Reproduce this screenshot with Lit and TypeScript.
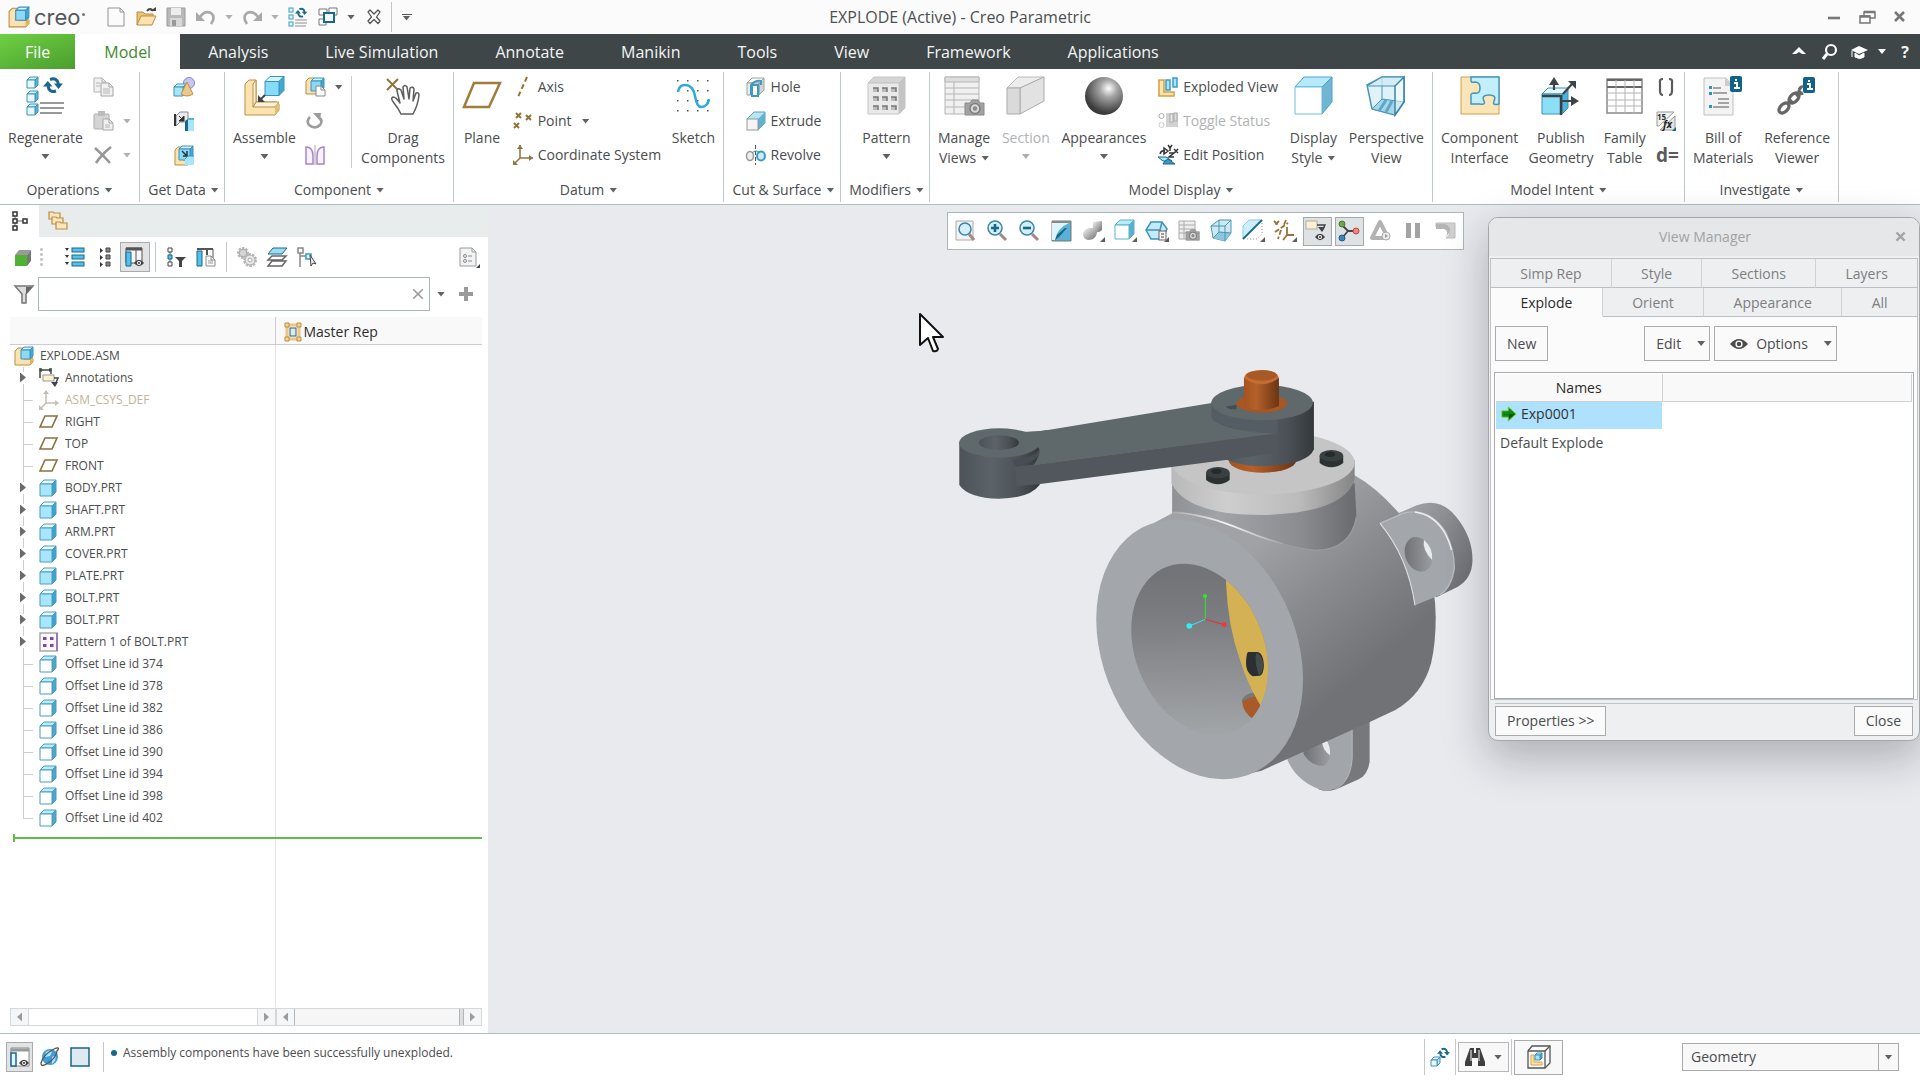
import { LitElement, html, svg, css, nothing } from "lit";
import { customElement, state } from "lit/decorators.js";
import { classMap } from "lit/directives/class-map.js";

/* ---------- icon helpers ---------- */

const TEAL = "#17688a";
const BLUE = "#3a9cc4";
const SKY = "#a6e6fc";
const TAN = "#fbe2ae";
const TANLINE = "#b98f45";
const BROWN = "#92733a";

// Box seen from the front with its top and right side showing.
const cube = (x: number, y: number, w: number, d: number, front = SKY, top = "#d5f4fe", side = "#45a8d2", line = "#3a93ba") => svg`
  <g stroke=${line} stroke-width="1" stroke-linejoin="round">
    <path d=${`M${x} ${y + d}l${d} ${-d}h${w}l${-d} ${d}z`} fill=${top} />
    <path d=${`M${x + w} ${y + d}l${d} ${-d}v${w}l${-d} ${d}z`} fill=${side} />
    <rect x=${x} y=${y + d} width=${w} height=${w} fill=${front} />
  </g>`;

const refresh = (x: number, y: number, s: number) => svg`
  <g transform=${`translate(${x} ${y}) scale(${s})`} fill="none" stroke=${TEAL} stroke-width="3">
    <path d="M7 3.500Q14 1 15.500 8" /><path d="M11 7.500h9l-4.500 5.500z" fill=${TEAL} stroke="none" />
    <path d="M13 15Q6 17 5 10" /><path d="M0 10.500h9.500L4.800 5z" fill=${TEAL} stroke="none" />
  </g>`;

const page = (x: number, y: number, w: number, h: number, fill = "#f4f4f5", line = "#9b9b9b") => svg`
  <path d=${`M${x} ${y}h${w - 4}l4 4v${h - 4}h${-w}z`} fill=${fill} stroke=${line} />
  <path d=${`M${x + w - 4} ${y}v4h4`} fill="none" stroke=${line} />`;

const eye = (x: number, y: number) => svg`
  <path d=${`M${x} ${y}q5-6.500 10 0q-5 6.500-10 0z`} fill="#444" /><circle cx=${x + 5} cy=${y} r="2" fill="#fff" /><circle cx=${x + 5} cy=${y} r="1" fill="#333" />`;

const badge = (x: number, y: number) => svg`
  <rect x=${x} y=${y} width="12" height="16" rx="2" fill="#0f6387" />
  <path d=${`M${x + 4} ${y + 7}h3v5m-3 0h6`} fill="none" stroke="#fff" stroke-width="2" /><rect x=${x + 5} y=${y + 3} width="2" height="2" fill="#fff" />`;

const camera = (x: number, y: number, s: number) => svg`
  <g transform=${`translate(${x} ${y}) scale(${s})`}><path d="M0 4h5l2-3h6l2 3h4v12H0z" fill="#a2a2a2" stroke="#8a8a8a" /><circle cx="10" cy="9.500" r="5" fill="#d9d9d9" stroke="#7d7d7d" stroke-width="1.500" /><circle cx="10" cy="9.500" r="2.200" fill="#8a8a8a" /></g>`;

const corner = svg`<path d="M24 18v5h-5z" fill="#5d5d5d" />`;

const asmIcon = svg`
  <path d="M1 5l3-3h6v11h9v3l-3 3H1z" fill=${TAN} stroke=${TANLINE} />
  <path d="M16 19l3-3V8l-3 3z" fill="#e0b45d" />
  ${cube(7, 1, 9, 3, "#8bd9f7")}`;

const ICONS: Record<string, unknown> = {
  asm: asmIcon,
  newFile: page(2, 1, 16, 18, "#fbfbfb", "#8f9496"),
  open: svg`<path d="M1 18V5h6l2 2h8v4" fill="#e9c274" stroke=${TANLINE} /><path d="M1 18l4-9h15l-4 9z" fill="#fbe2ae" stroke=${TANLINE} /><path d="M11 4q3-4 6 0" fill="none" stroke="#444" stroke-width="2" /><path d="M14 4h6V0z" fill="#444" />`,
  save: svg`<path d="M1 1h18v18H1z" fill="#b9b9b9" stroke="#9a9a9a" /><path d="M5 1h10v7H5z" fill="#ededed" /><path d="M4 11h12v8H4z" fill="#d8d8d8" /><path d="M6 13h4v6H6z" fill="#999" />`,
  undo: svg`<path d="M4 10Q9 3 15 6q5 4 0 11" fill="none" stroke="#a9a9a9" stroke-width="2.600" /><path d="M0 5v9h9z" fill="#a9a9a9" />`,
  redo: svg`<path d="M16 10Q11 3 5 6q-5 4 0 11" fill="none" stroke="#a9a9a9" stroke-width="2.600" /><path d="M20 5v9h-9z" fill="#a9a9a9" />`,
  regenSmall: svg`${[1, 8, 15].map((y) => svg`<rect x="1" y=${y} width="4" height="4" fill="#dff5fd" stroke=${BLUE} />`)}${refresh(7, 0, 0.62)}<path d="M7 13h12M7 16h12M7 19h11" stroke="#8d8d8d" />`,
  windows: svg`<path d="M1 2h8v6H1zM11 1h8v7h-8zM1 12h7v6H1z" fill="#fff" stroke="#777" /><rect x="6" y="6" width="10" height="9" fill="#f4fbff" stroke=${TEAL} stroke-width="2" />`,
  closeWin: svg`<path d="M4 5l2-2 4 4 4-4 2 2-3.500 5 3.500 4-2 2.500-4-4-4 4L4 14l3.500-4z" fill="none" stroke="#555" stroke-width="1.300" stroke-linejoin="round" />`,
  copy: svg`${page(1, 1, 12, 14, "#f1f1f1", "#b4b4b4")}${page(8, 6, 12, 13, "#f1f1f1", "#a5a5a5")}<path d="M3 6h4M3 9h4M10 12h7M10 14h7M10 16h7" stroke="#b5b5b5" />`,
  paste: svg`<rect x="1" y="3" width="15" height="15" rx="1" fill="#d5d5d5" stroke="#adadad" /><rect x="5" y="0" width="7" height="5" fill="#bcbcbc" />${page(10, 8, 10, 11, "#f1f1f1", "#a5a5a5")}<path d="M12 14h5M12 16h5" stroke="#b5b5b5" />`,
  del: svg`<path d="M2 3Q9 9 17 18M18 2Q9 9 3 18" fill="none" stroke="#979797" stroke-width="2.600" />`,
  shapes: svg`<circle cx="15" cy="6" r="5.500" fill="#c9c5f0" stroke="#7f86d4" />${cube(0, 7, 9, 3)}<path d="M13 5l-6 12q6 4 12 0z" fill="#ecc98b" stroke=${TANLINE} />`,
  copyGeom: svg`<path d="M2 15V5l4-4h8v10H6z" fill="#e9e9ee" stroke="#8a8a90" /><path d="M1 3v12" stroke="#333" stroke-width="2" /><path d="M5 5l5 5M10 5v5H5z" fill="#333" stroke="#333" /><path d="M11 20V10l3-2h6v12z" fill=${SKY} /><path d="M11 20V10l3-2v12z" fill=${TEAL} /><path d="M14 8h6" stroke="#5fb2d6" stroke-width="2" />`,
  shrink: svg`<path d="M1 5l3-3h5v13h5v5H1z" fill=${TAN} stroke=${TANLINE} />${cube(5, 1, 11, 3, "#8bd9f7")}<path d="M8 6l4 4m-3 1h4V6" fill="none" stroke="#234" stroke-width="1.500" /><path d="M11 14l3-3h6v9h-9z" fill=${SKY} /><path d="M11 14l3-3h6" fill="none" stroke="#3a93ba" />`,
  createAsm: svg`<path d="M1 4l3-3h5v11h6v5H1z" fill=${TAN} stroke=${TANLINE} />${cube(6, 1, 10, 3, "#8bd9f7")}${page(11, 9, 9, 10, "#fff", "#888")}`,
  repeat: svg`<path d="M5 6Q1 10 4 14q6 5 11 0 3-4 0-7" fill="none" stroke="#9c9c9c" stroke-width="2.600" /><path d="M8 2h8l-1 8z" fill="#9c9c9c" />`,
  mirror: svg`<path d="M1 2q7 0 7 9v8H1zM19 2q-7 0-7 9v8h7z" fill="#f8f2fc" stroke="#a884c9" stroke-width="1.500" /><path d="M10 0v20" stroke="#a5a5a5" />`,
  axis: svg`<path d="M14 0L5 20" stroke=${BROWN} stroke-width="2" stroke-dasharray="5 3" />`,
  point: svg`<path d="M3 2l5 5m0-5l-5 5M13 4l5 5m0-5l-5 5M1 12l5 5m0-5l-5 5" stroke=${BROWN} stroke-width="2" />`,
  csys: svg`<path d="M7 0v13h13M7 13l-6 6" fill="none" stroke=${BROWN} stroke-width="1.500" /><path d="M4 4l3-4 3 4zM16 10l4 3-4 3zM0 15v5h5z" fill=${BROWN} />`,
  hole: svg`${cube(1, 1, 12, 5, "#ececee", "#fff", "#d3d3d6", "#a0a0a0")}<path d="M5 18V8q4-5 10-4v4" fill="none" stroke=${BLUE} stroke-width="2" /><rect x="6" y="8" width="6" height="11" fill="#fff" stroke=${BLUE} stroke-width="2" />`,
  extrude: svg`<path d="M1 8l7-7h11v11l-7 7z" fill="#b9e4f3" stroke="#5f9fb8" /><path d="M12 8l7-7v11l-7 7z" fill="#62b1cf" /><rect x="1" y="8" width="11" height="11" fill="#f5f5f6" stroke="#999" />`,
  revolve: svg`<ellipse cx="4" cy="11" rx="3.500" ry="4.500" fill="#eee" stroke="#999" stroke-width="1.500" /><ellipse cx="15" cy="11" rx="4" ry="4.500" fill="#c9ecf8" stroke=${BLUE} stroke-width="2" /><path d="M6 8q4-4 8 0" fill="none" stroke=${BLUE} /><path d="M9.500 0v20" stroke="#555" stroke-dasharray="4 2" />`,
  explodedView: svg`<path d="M1 3h5v12h10v4H1z" fill=${TAN} stroke="#d5a03f" stroke-width="1.500" /><rect x="8" y="3" width="4" height="10" fill=${SKY} stroke=${BLUE} stroke-width="1.500" /><rect x="15" y="1" width="4" height="9" fill=${SKY} stroke=${BLUE} stroke-width="1.500" />`,
  toggle: svg`<circle cx="3.500" cy="5" r="2.500" fill="none" stroke="#aaa" /><circle cx="3.500" cy="14" r="2.500" fill="none" stroke="#ccc" /><path d="M8 2h12v14H8z" fill="#d2d2d2" /><rect x="12" y="3" width="3" height="8" fill="#e9e9e9" stroke="#aaa" /><rect x="16" y="2" width="3" height="8" fill="#ddd" stroke="#aaa" />`,
  editPos: svg`<path d="M2 9Q3 5 7 6" fill="none" stroke="#333" stroke-width="1.500" /><path d="M6 3l4 3-4 3zM10 0l2 3 2-3M12 3v3M16 4l4 4m0-4l-4 4M11 8h5l-5 4h5" fill="none" stroke="#333" stroke-width="1.500" /><path d="M0 12h8l6 4H5z" fill=${SKY} stroke=${TEAL} /><path d="M5 19h12l-7-5-3 2z" fill=${BLUE} stroke=${TEAL} />`,
  parens: svg`<path d="M7 2Q3 2 4 6v8q0 4 3 4M13 2q4 0 3 4v8q0 4-3 4" fill="none" stroke="#5b5b5b" stroke-width="2.200" />`,
  switchDim: svg`<path d="M1 1h17L3 15H1z" fill="#f2f2f2" stroke="#999" /><path d="M19 5v14H4z" fill="#e4e4e4" stroke="#999" /><text x="1" y="9" font-size="8" font-weight="700" fill="#333">15</text><text x="7" y="17" font-size="10" font-style="italic" font-weight="700" fill="#222">fx</text><path d="M20 16v4h-4z" fill=${TEAL} />`,
  relation: svg`<text x="0" y="17" font-size="19" font-weight="700" fill="#5b5b5b">d=</text>`,

  /* large ribbon icons, 40 x 40 */
  regenerate: svg`${[0, 14, 27].map((y) => cube(2, y + 1, 8, 3, "#e9f8fe", "#d5f4fe", "#5ab3d9"))}${refresh(18, 0, 1)}<path d="M15 27h24M15 32h24M15 37h22" stroke="#999" stroke-width="2" />`,
  assemble: svg`<path d="M1 8l4-4h7v22h21l2 2v6l-4 5H1z" fill=${TAN} stroke=${TANLINE} /><path d="M9 8l3-4v22l-3 5zM9 31l3-5h23l-4 5z" fill="#fdf3da" stroke=${TANLINE} /><path d="M31 31l4-5v7l-4 6z" fill="#e5bd6c" />${cube(21, 0.5, 14, 5, "#86dbf9")}<path d="M21 19l-5 5" stroke="#444" stroke-width="2" /><path d="M14 19v7h7z" fill="#444" />`,
  drag: svg`<path d="M4 3l11 11M15 3L4 14" stroke=${BROWN} stroke-width="2" /><path d="M18 38q-3-6-7-11-4-5-1-6 3 0 7 6L14 15q0-4 4-1l3 9-1-12q2-3 4 0l2 12 1-11q3-2 4 1l-1 12 3-8q3-1 3 2-1 10-6 19z" fill="#fff" stroke="#5d5d5d" stroke-width="1.500" stroke-linejoin="round" />`,
  plane: svg`<path d="M12 7h26l-11 24H2z" fill="none" stroke="#a07c3c" stroke-width="2.500" />`,
  sketch: svg`${[4, 14, 24, 34].map((x) => [4, 14, 24, 34].map((y) => svg`<rect x=${x} y=${y} width="1.500" height="1.500" fill="#555" />`))}<path d="M5 16Q6 9 12 9q8 0 10 11 2 12 7 11 6-1 7-8" fill="none" stroke="#2fa8e0" stroke-width="2.500" />`,
  pattern: svg`${cube(2, 1, 31, 6, "#e9e9e9", "#d5d5d5", "#c4c4c4", "#c4c4c4")}${[7, 16, 25].map((x) => [12, 21, 30].map((y) => svg`<rect x=${x} y=${y} width="5" height="4" fill="#bbb" /><path d=${`M${x} ${y}h5v4`} fill="none" stroke="#777" stroke-width="1.500" />`))}`,
  manage: svg`<path d="M1 1h34v37H1z" fill="#f0f0f0" stroke="#b5b5b5" /><path d="M1 1h34v5H1z" fill="#ddd" stroke="#b5b5b5" /><path d="M1 12h34M1 18h34M1 24h34M1 31h34M10 6v32" stroke="#b5b5b5" />${camera(21, 23, 1)}`,
  section: svg`<path d="M1 12L12 1h26L14 12z" fill="#ececec" stroke="#b9b9b9" /><path d="M14 12L38 1v24L14 38z" fill="#e2e2e2" stroke="#ababab" /><path d="M1 12h13v26H1z" fill="#dadada" stroke="#ababab" />`,
  appearances: svg`<defs><radialGradient id="ball" cx=".62" cy=".3" r=".65"><stop offset="0" stop-color="#fff" /><stop offset=".35" stop-color="#a5a5a5" /><stop offset="1" stop-color="#3b3b3b" /></radialGradient></defs><circle cx="20" cy="20" r="19" fill="url(#ball)" />`,
  display: svg`<path d="M2 11L11 1h28L29 11z" fill="#b4eafc" stroke="#4ba3c7" /><path d="M29 11L39 1v25L29 38z" fill="#70b5d2" stroke="#4ba3c7" /><path d="M2 11h27v27H2z" fill="#fff" stroke="#6fc0df" />`,
  perspective: svg`<path d="M1 9L16 1h22v25l-9 13L6 33z" fill="#dff1f9" stroke="#4c93b4" stroke-width="1.500" /><path d="M16 1v22l22 3L29 39 6 33l10-10" fill="#a5d5e8" stroke="#4c93b4" /><path d="M16 1h22l-9 9H1z" fill="#cfeaf5" fill-opacity=".7" stroke="#4c93b4" /><path d="M29 10v29l9-13V1z" fill="#fff" fill-opacity=".5" stroke="#3a85a8" stroke-width="1.500" /><path d="M20 24l-7 11M26 25l-6 11" stroke="#5fa9c8" stroke-width="3" />`,
  interface: svg`<path d="M1 1h38v37H1z" fill="#fbe5b8" stroke="#cba04f" /><path d="M11 1h28v27q-7 2-5-3 3-6-5-6-8 0-5 6 2 4-4 3H11v-8q-1-3 4-3 5 1 5-5t-5-6q-4 1-4-1z" fill="#c3eefc" stroke="#4396bb" stroke-width="1.500" />`,
  publish: svg`${cube(1, 12, 20, 6, "#8ddff8", "#e5f8fe", "#4fb2d8")}<path d="M1 20h18M20 19v20" stroke="#3b4043" stroke-width="2.500" /><path d="M13 14V6M22 18l9-10M20 25h12" stroke="#3f4547" stroke-width="2.200" /><path d="M8 9l5-8 5 8zM27 5h8v8zM30 20l8 5-8 5z" fill="#3f4547" />`,
  family: svg`<path d="M2 3h35v34H2z" fill="#fff" stroke="#888" stroke-width="1.500" /><path d="M2 4h35M2 11h35" stroke="#666" stroke-width="2" /><path d="M2 17h35M2 24h35M2 30h35M11 4v33M20 4v33M29 4v33" stroke="#b5b5b5" />`,
  bom: svg`<path d="M1 2h22l7 8v29H1z" fill="#f3f3f4" stroke="#c0c0c0" /><path d="M22 2l8 8h-8z" fill="#ccc" /><path d="M10 12h8M10 17h14M15 23h11M15 27h11M10 31h16" stroke="#8b8b8b" stroke-width="1.500" /><path d="M6 10h3v3H6zM6 16h3v3H6zM6 29h3v3H6z" fill="#2b93c9" />${badge(27, 0)}`,
  refViewer: svg`<g fill="none" stroke="#666" stroke-width="3.200"><ellipse cx="7" cy="32" rx="6" ry="3.800" transform="rotate(-45 7 32)" /><ellipse cx="17" cy="22" rx="6" ry="3.800" transform="rotate(-45 17 22)" /><path d="M10 29l5-5M19 20l5-5M22 14q2-4 4-3M22 14q0 5 4 3" /></g>${badge(26, 1)}`,

  /* title and tab bar */
  up: svg`<path d="M3 12l7-7 7 7h-4l-3-2-3 2z" fill="#fff" />`,
  find: svg`<circle cx="12" cy="8" r="5" fill="none" stroke="#fff" stroke-width="2.200" /><path d="M8 12l-4 5" stroke="#fff" stroke-width="3" />`,
  learn: svg`<path d="M2 8l8-4 9 4-9 4z" fill="#fff" /><path d="M6 11v4q5 3 9 0v-4l-5 3zM3 9v6" fill="#fff" stroke="#fff" />`,
  min: svg`<path d="M4 11h12" stroke="#777" stroke-width="2.600" />`,
  restore: svg`<path d="M7 5h11v6H7z" fill="none" stroke="#777" stroke-width="1.500" /><path d="M7 5h11" stroke="#777" stroke-width="2.500" /><path d="M3 9h10v7H3z" fill="#fbfbfb" stroke="#777" stroke-width="1.500" /><path d="M3 9.500h10" stroke="#777" stroke-width="2.500" />`,
  close: svg`<path d="M5 5l9 9M14 5l-9 9" stroke="#777" stroke-width="2.600" />`,

  /* model tree */
  treeTab: svg`<path d="M5 4v13M5 10h10" fill="none" stroke="#666" /><path d="M3 1h4v4H3zM3 8h4v4H3zM3 15h4v4H3zM13 8h4v4h-4z" fill="#fff" stroke="#333" stroke-width="1.500" />`,
  folders: svg`${[[1, 1], [4, 6], [8, 11]].map(([x, y]) => svg`<path d=${`M${x} ${y + 7}v-7h4l1 1h6v6z`} fill="#fce7bd" stroke=${TANLINE} stroke-width="1.200" />`)}`,
  greenCube: svg`<path d="M2 8l4-5h12l-4 5z" fill="#9a9a9a" /><path d="M14 8l4-5v11l-4 5z" fill="#777" /><path d="M2 8h12v11H2z" fill="#4fb233" />`,
  expandAll: svg`${[1, 8, 15].map((y) => svg`<path d=${`M0 ${y}h4l-2 3z`} fill="#333" /><rect x="7" y=${y} width="12" height="4" fill="#57c0ea" stroke=${TEAL} />`)}`,
  collapseAll: svg`${[1, 8, 15].map((y) => svg`<path d=${`M5 ${y}v5l3-2.500z`} fill="#333" /><path d=${`M11 ${y}h4v4h-4z`} fill="#888" stroke="#444" />`)}`,
  columns: svg`<path d="M1 1h16v15H1z" fill="#f6f6f6" stroke="#555" /><path d="M1 2h16" stroke="#555" stroke-width="3" /><path d="M1 5h5v14H1z" fill="#57c0ea" stroke=${TEAL} /><path d="M11 2v13" stroke="#555" />${eye(9, 16)}`,
  treeFilter: svg`<path d="M4 4v14" stroke="#555" /><path d="M2 1h4v4H2z" fill="#fff" stroke="#444" /><path d="M2 8h4v4H2z" fill="#57c0ea" stroke=${TEAL} /><path d="M2 15h4v4H2z" fill="#fff" stroke="#444" /><path d="M9 10h11l-4 4v6h-3v-6z" fill="#444" />`,
  treeCols: svg`<path d="M1 2h16v12" fill="none" stroke="#555" /><path d="M1 2h16M11 2v6" stroke="#555" stroke-width="2" /><path d="M1 4h5v15H1z" fill="#57c0ea" stroke=${TEAL} />${page(10, 9, 9, 10, "#fff", "#888")}<path d="M12 14h5M12 16h5" stroke="#999" />`,
  gears: svg`<circle cx="6" cy="6" r="4.500" fill="#ccc" stroke="#b9b9b9" stroke-width="3" stroke-dasharray="2.200 1.100" /><circle cx="6" cy="6" r="3.800" fill="#d4d4d4" stroke="#a9a9a9" /><circle cx="13" cy="13" r="5.500" fill="#eee" stroke="#b9b9b9" stroke-width="3" stroke-dasharray="2.300 1.100" /><circle cx="13" cy="13" r="5" fill="#e9e9e9" stroke="#a9a9a9" /><circle cx="13" cy="13" r="2" fill="#fff" stroke="#a9a9a9" />`,
  layers: svg`<path d="M1 19l4-5h14l-4 5zM1 13l4-4h14l-4 4z" fill="#fff" stroke="#666" stroke-width="1.500" /><path d="M1 7l5-6h14l-5 6z" fill="#9cdcf5" stroke=${TEAL} />`,
  selTree: svg`<path d="M3 5v15M3 9h6" fill="none" stroke="#888" stroke-width="1.500" /><path d="M1 1h5v5H1z" fill="#fff" stroke="#888" stroke-width="1.500" /><path d="M9 7h5v5H9z" fill="#dff4fd" stroke=${BLUE} stroke-width="1.500" /><path d="M13 8l6 9-3-1-2 3z" fill="#eee" stroke="#444" />`,
  treeSettings: svg`${page(1, 1, 16, 18, "#f1f3f4", "#9b9b9b")}<circle cx="6" cy="9" r="1.500" fill="none" stroke="#888" /><circle cx="6" cy="14" r="1.500" fill="none" stroke="#888" /><path d="M9 9h4M9 14h4" stroke="#888" /><path d="M21 17v4h-4z" fill="#444" />`,
  funnel: svg`<path d="M1 2h18l-7 8v9H8v-9z" fill="#ddd" stroke="#777" stroke-width="1.500" /><path d="M12 10l6-7h-6z" fill="#666" />`,
  plus: svg`<path d="M10 3v14M3 10h14" stroke="#9b9b9b" stroke-width="4" />`,
  clear: svg`<path d="M4 4l12 12M16 4L4 16" stroke="#9b9b9b" stroke-width="2" />`,
  masterRep: svg`<path d="M3 3h12v14H3z" fill="#e9f8ff" stroke="#ecc684" stroke-width="3" /><path d="M1 1h4v4H1zM13 1h4v4h-4zM1 15h4v4H1zM13 15h4v4h-4z" fill="#f6d490" stroke=${TANLINE} /><rect x="6" y="6" width="6" height="8" fill="#cdeffc" stroke="#555" />`,
  annotations: svg`<path d="M1 10V0M12 0v6M1 2h11" fill="none" stroke="#444" stroke-width="1.500" /><path d="M3 0L0 2l3 2zM10 0l3 2-3 2z" fill="#444" /><rect x="4" y="7" width="11" height="6" fill="#fdf1d2" stroke="#999" /><path d="M15 10h4l-3 7" fill="none" stroke="#444" stroke-width="1.500" /><path d="M12 14l4 5 3-5z" fill="#444" />`,
  csysDim: svg`<g opacity=".5"><path d="M7 1v12h12M7 13l-6 6" fill="none" stroke="#8b8069" stroke-width="1.500" /><path d="M4 4l3-4 3 4zM16 10l4 3-4 3zM0 15v5h5z" fill="#8b8069" /></g>`,
  datum: svg`<path d="M6 4h12l-5 11H1z" fill="none" stroke="#8a7044" stroke-width="1.600" />`,
  part: cube(1, 2, 12, 4, "#a8e6fd", "#e8f9ff", "#3aa3d4", "#4b9cbf"),
  offset: cube(1, 2, 12, 4, "#ffffff", "#b8ecfd", "#4ea6c8", "#4b9cbf"),
  patternSmall: svg`<path d="M1 1h17v18H1z" fill="#fbf7fd" stroke="#a8a8ae" stroke-width="1.500" /><path d="M18 1v18" stroke="#9a78bb" stroke-width="2" />${[4, 11].map((x) => [5, 12].map((y) => svg`<rect x=${x} y=${y} width="3.500" height="3" fill="#7a4aa8" />`))}`,

  /* graphics toolbar, 24 x 24 */
  refit: svg`<path d="M3 2h17v19H3z" fill="#f3f3f3" stroke="#aaa" /><circle cx="12" cy="10" r="6" fill="#d3effb" stroke="#3a85a8" stroke-width="1.500" /><path d="M16 15l5 6" stroke="#a28a80" stroke-width="3" />`,
  zoomIn: svg`<circle cx="10" cy="9" r="7" fill="#d3effb" stroke="#3a85a8" stroke-width="1.500" /><path d="M10 5v8M6 9h8" stroke=${TEAL} stroke-width="2.600" /><path d="M15 15l6 6" stroke="#a28a80" stroke-width="3" />`,
  zoomOut: svg`<circle cx="10" cy="9" r="7" fill="#d3effb" stroke="#3a85a8" stroke-width="1.500" /><path d="M6 9h8" stroke=${TEAL} stroke-width="2.600" /><path d="M15 15l6 6" stroke="#a28a80" stroke-width="3" />`,
  repaint: svg`<path d="M3 2h19v20H3z" fill="#5bb1d3" stroke="#777" /><path d="M3 4h17q-12 5-14 17H3z" fill="#dff4fc" /><path d="M3 3h19" stroke="#888" stroke-width="2" /><path d="M18 9l-8 9-4 3 2-5 8-7z" fill=${TEAL} />`,
  shading: svg`<defs><linearGradient id="metal" x2="1" y2="1"><stop offset="0" stop-color="#f5f5f5" /><stop offset="1" stop-color="#6c6c6c" /></linearGradient></defs><path d="M12 3l9-1v9q-3 3-7 2-3-3-2-10z" fill="url(#metal)" /><path d="M8 9h8q1 12-9 12-5-1-5-6 0-4 6-6z" fill="url(#metal)" />${corner}`,
  dispStyle: svg`${cube(2, 1, 14, 5, "#fff", "#b9ecfb", "#5cb0cf", "#5cb0cf")}${corner}`,
  orient: svg`<path d="M6 3h11l5 7-5 10H6l-5-9z" fill="#c4ecf8" stroke="#3a93ba" stroke-width="1.500" /><path d="M1 11h14l2-8M15 11l2 9" fill="none" stroke="#3a93ba" stroke-width="1.500" /><rect x="14" y="12" width="7" height="9" fill="#f5f5f5" stroke="#666" /><path d="M16 15h3M16 18h3" stroke="#444" />${corner}`,
  savedViews: svg`<path d="M2 2h16v18H2z" fill="#eee" stroke="#aaa" /><path d="M2 6h16M2 10h16M2 14h16M7 2v18" stroke="#aaa" />${camera(9, 10, 0.7)}`,
  persp: svg`<path d="M2 7l8-6h12v13l-6 8-12-3z" fill="#cbe8f3" stroke="#4c93b4" /><path d="M10 13l12 1-6 8-12-3z" fill="#8cc7de" /><path d="M2 7h14l6-6M16 7v15M10 1v12l12 1M10 13l-6 6" fill="none" stroke="#4c93b4" />`,
  section2: svg`<path d="M2 7l6-6h13v0L2 20z" fill="#cdeef9" stroke="#8fcbe3" /><path d="M21 1v14l-5 5H5" fill="none" stroke="#999" stroke-dasharray="1 2" /><path d="M21 1L2 20" stroke=${TEAL} stroke-width="1.800" />${corner}`,
  datums: svg`<path d="M1 2l5 5m0-5L1 7M13 1l-3 7M8 11l-3 9M2 13L15 4" stroke=${BROWN} stroke-width="1.800" stroke-dasharray="5 2" /><path d="M14 8v8h7M14 16l-4 5" fill="none" stroke=${BROWN} stroke-width="1.800" />${corner}`,
  annot: svg`<rect x="1" y="2" width="11" height="8" fill="#fdf1d2" stroke="#aaa" /><path d="M12 6h8l-3 6" fill="none" stroke="#444" stroke-width="1.500" /><path d="M13 8l4 5 3-5z" fill="#444" />${eye(10, 18)}`,
  spin: svg`<path d="M4 5l7 7 8 0M11 12l-6 7" fill="none" stroke="#444" stroke-width="1.800" /><circle cx="5" cy="5" r="3" fill="#6aa84f" stroke="#447a33" /><circle cx="19" cy="12" r="3" fill="#e98a7d" stroke="#b94a3f" /><circle cx="5" cy="19" r="3" fill="#3e85b5" stroke="#1d5c86" />`,
  sim: svg`<path d="M11 3l8 16H3z" fill="none" stroke="#b3b3b3" stroke-width="4" stroke-linejoin="round" /><circle cx="17" cy="17" r="4" fill="#eee" stroke="#aaa" /><path d="M16 15l3 2-3 2z" fill="#999" />`,
  pause: svg`<path d="M5 4h5v15H5zM14 4h5v15h-5z" fill="#a3a3a3" />`,
  simEnd: svg`<path d="M3 4h19v15h-9q4-2 4-6-1-5-6-5H3z" fill="#d0d0d0" stroke="#bbb" /><path d="M3 5h9q7 3 4 9l-4 5q5-7-1-9H3z" fill="#b5b5b5" />`,

  /* dialog and status bar */
  eye: svg`<path d="M0 10q10-11 20 0-10 11-20 0z" fill="#4b4b4b" /><circle cx="10" cy="10" r="4" fill="#fff" /><circle cx="10" cy="10" r="2.500" fill="#4b4b4b" />`,
  active: svg`<path d="M1 6h8V1l10 9-10 9v-5H1z" fill="#0b8a14" stroke="#8bd43a" /><path d="M2 11h8v5l7-6z" fill="#124d0d" />`,
  panel: svg`<path d="M1 1h18v18H1z" fill="#fff" stroke="#888" /><path d="M1 3h18" stroke="#999" stroke-width="3" /><path d="M1 6h5v13H1z" fill="#dff4fc" stroke=${TEAL} stroke-width="1.500" />${eye(9, 16)}`,
  globe: svg`<circle cx="10" cy="10" r="8" fill="#3d9dd8" /><path d="M6 5q4-3 6 0l-2 4-5 1zM12 10l4-2-1 6-3 3z" fill="#b9e2f6" /><path d="M17 4Q21-1 14 2 3 8 1 16q0 5 7 0 8-5 9-12z" fill="none" stroke="#555" stroke-width="1.300" />`,
  blank: svg`<path d="M1 1h18v18H1z" fill="#dfeaf0" stroke=${TEAL} stroke-width="1.500" />`,
  regenPart: svg`${refresh(7, 0, 0.65)}${cube(1, 10, 6, 3, "#eefaff", "#eefaff", "#bfe6f5")}`,
  binoculars: svg`<path d="M5 1h4v5h2V1h4l5 14v4h-7v-8H7v8H0v-4z" fill="#3f3f3f" /><path d="M6 3v11M14 3v11" stroke="#9c9c9c" stroke-width="2" />`,
  modelBox: svg`<path d="M1 6l4-5h18v17l-5 5H1z" fill="#fafafa" stroke="#555" stroke-width="1.300" /><path d="M1 6h17v17M18 6l5-5" fill="none" stroke="#555" stroke-width="1.300" /><path d="M4 10h3v7h8v3H4z" fill=${TAN} stroke="#dba446" />${cube(8, 8, 5, 2)}`,
};

const icon = (name: string, size = 20) => {
  const box = size >= 40 ? 40 : size === 24 ? 24 : 20;
  return html`<svg class="icon" width=${size} height=${size} viewBox=${`0 0 ${box} ${box}`} aria-hidden="true">${ICONS[name]}</svg>`;
};

/* ---------- data ---------- */

const MENU = ["Analysis", "Live Simulation", "Annotate", "Manikin", "Tools", "View", "Framework", "Applications"];

const VIEW_TOOLS = [
  ["refit", "Refit"], ["zoomIn", "Zoom in"], ["zoomOut", "Zoom out"], ["repaint", "Repaint"],
  ["shading", "Rendering options"], ["dispStyle", "Display style"], ["orient", "Saved orientations"], ["savedViews", "View manager"],
  ["persp", "Perspective view"], ["section2", "Sections"], ["datums", "Datum display filters"], ["annot", "Annotation display"],
  ["spin", "Spin center"], ["sim", "Simulate"], ["pause", "Pause"], ["simEnd", "End simulation"],
];

type Node = { name: string; icon: string; open?: boolean; dim?: boolean };
const part = (name: string): Node => ({ name: `${name}.PRT`, icon: "part", open: true });
const NODES: Node[] = [
  { name: "Annotations", icon: "annotations", open: true },
  { name: "ASM_CSYS_DEF", icon: "csysDim", dim: true },
  ...["RIGHT", "TOP", "FRONT"].map((name) => ({ name, icon: "datum" })),
  ...["BODY", "SHAFT", "ARM", "COVER", "PLATE", "BOLT", "BOLT"].map(part),
  { name: "Pattern 1 of BOLT.PRT", icon: "patternSmall", open: true },
  ...[374, 378, 382, 386, 390, 394, 398, 402].map((id) => ({ name: `Offset Line id ${id}`, icon: "offset" })),
];

/* ---------- 3D model ---------- */

const bolt = (x: number, y: number) => svg`
  <path d=${`M${x - 33} ${y - 10}v22q33 26 66 0v-22z`} fill="#2c3132" />
  <ellipse cx=${x} cy=${y - 10} rx="33" ry="17" fill="#394041" />
  <ellipse cx=${x - 4} cy=${y - 14} rx="14" ry="8" fill="#252a2b" />`;

const model = html`
  <svg class="model" width="560" height="460" viewBox="0 0 560 460" role="img" aria-label="Valve assembly">
    <defs>
      <linearGradient id="body" gradientUnits="userSpaceOnUse" x1="900" y1="560" x2="1230" y2="930">
        <stop offset="0" stop-color="#a0a2a6" /><stop offset=".45" stop-color="#8a8b8f" /><stop offset="1" stop-color="#717276" />
      </linearGradient>
      <linearGradient id="bore" x1=".35" y1="0" x2=".6" y2="1">
        <stop offset=".1" stop-color="#737478" /><stop offset=".35" stop-color="#7d7e82" /><stop offset="1" stop-color="#a3a6a9" />
      </linearGradient>
      <linearGradient id="neck"><stop offset="0" stop-color="#8f9194" /><stop offset=".25" stop-color="#a1a4a7" /><stop offset=".7" stop-color="#8b8c90" /><stop offset="1" stop-color="#696a6e" /></linearGradient>
      <linearGradient id="rim"><stop offset="0" stop-color="#b9b9b9" /><stop offset=".3" stop-color="#cfcece" /><stop offset=".7" stop-color="#bcbbbb" /><stop offset="1" stop-color="#858585" /></linearGradient>
      <linearGradient id="hub"><stop offset="0" stop-color="#4c5258" /><stop offset=".4" stop-color="#5b6369" /><stop offset=".75" stop-color="#4b5056" /><stop offset="1" stop-color="#33383b" /></linearGradient>
      <linearGradient id="copper"><stop offset="0" stop-color="#a5531f" /><stop offset=".35" stop-color="#b5602a" /><stop offset="1" stop-color="#6b3513" /></linearGradient>
      <linearGradient id="lug" x2="1" y2="1"><stop offset="0" stop-color="#a3a6aa" /><stop offset="1" stop-color="#68696d" /></linearGradient>
      <linearGradient id="lugHole"><stop offset="0" stop-color="#707175" /><stop offset="1" stop-color="#9b9da1" /></linearGradient>
      <linearGradient id="shine"><stop offset="0" stop-color="#f4f4f5" stop-opacity=".2" /><stop offset=".5" stop-color="#f8f8f9" /><stop offset="1" stop-color="#f4f4f5" stop-opacity=".1" /></linearGradient>
      <clipPath id="boreClip"><circle r="1" transform="matrix(191.5 59 0 250 727 898)" /></clipPath>
    </defs>
    <g transform="scale(.357143 .333333)">
      <!-- lower lug -->
      <path d="M1060 1160L1203 1100V1235Q1198 1275 1172 1288L1110 1318Q1080 1328 1060 1318Z" fill="#77787c" />
      <path d="M972 1228Q1000 1300 1080 1324Q1150 1310 1154 1225V1130L1000 1190Z" fill="#a2a5a9" />
      <path d="M1154 1130V1225Q1150 1295 1105 1318" fill="none" stroke="#b3b5b8" stroke-width="3" />
      <path d="M1018 1212Q1040 1250 1075 1247Q1100 1230 1088 1190L1070 1165L1018 1195Z" fill="url(#lugHole)" />
      <path d="M1070 1178Q1072 1200 1092 1216Q1094 1190 1082 1170Z" fill="#e8eaee" />
      <!-- body -->
      <path d="M650 490L600 518L800 1287L900 1262L1205 1115L1275 1080Q1350 1035 1375 940Q1388 880 1388 800Q1388 640 1283 487Q1225 415 1160 375L900 420Z" fill="url(#body)" />
      <!-- side lug -->
      <path d="M1283 490L1335 466Q1400 440 1445 500Q1491 560 1491 630Q1490 685 1450 710L1390 742L1290 600Z" fill="url(#lug)" />
      <path d="M1232 520L1300 489Q1370 472 1415 545Q1441 600 1440 655Q1432 712 1400 735L1330 766Q1310 620 1232 520Z" fill="#a3a6aa" />
      <path d="M1232 520L1300 489Q1370 472 1415 545Q1441 600 1440 655Q1432 712 1400 735" fill="none" stroke="#b9bbbe" stroke-width="4" />
      <path d="M1330 486Q1385 494 1415 552Q1428 580 1432 600" fill="none" stroke="#eff0f1" stroke-width="4" />
      <path d="M1330 766Q1310 620 1232 520" fill="none" stroke="#dedfe1" stroke-width="3" />
      <circle r="1" transform="matrix(39 10 0 51 1340 613)" fill="url(#lugHole)" />
      <path d="M1355 569Q1350 600 1378 630Q1382 595 1355 569Z" fill="#e8eaee" />
      <!-- neck -->
      <path d="M650 400V488Q740 490 850 540Q960 590 1050 601Q1150 600 1166 500L1161 400Z" fill="url(#neck)" />
      <path d="M650 488Q740 490 850 540Q960 590 1050 601Q1150 600 1166 500" fill="none" stroke="#9c9ea1" stroke-width="3" />
      <path d="M655 487Q740 491 850 541Q910 568 960 580" fill="none" stroke="url(#shine)" stroke-width="5" stroke-linecap="round" />
      <!-- front flange and bore -->
      <circle r="1" transform="matrix(289.500 90 0 379 727 898)" fill="#a3a6aa" />
      <circle r="1" transform="matrix(191.500 59 0 250 727 898)" fill="url(#bore)" />
      <g clip-path="url(#boreClip)">
        <path d="M846 1050Q858 1030 878 1028L920 1110H880Q845 1085 846 1050Z" fill="#a85a28" />
        <path d="M846 1050Q850 1032 878 1028L880 1040Q860 1044 846 1056Z" fill="#77787c" />
        <path d="M801 680V700Q806 830 840 930Q860 1000 897 1066L960 1060V700Z" fill="#d4b254" />
      </g>
      <path d="M862 906H890Q905 910 907 945Q906 975 895 977L875 979Q856 965 857 940Q857 915 862 906Z" fill="#2b2f30" />
      <path d="M885 908Q904 915 905 945Q903 972 893 975Q880 940 885 908Z" fill="#454b4c" />
      <!-- spin centre -->
      <path d="M743 808V738" stroke="#2fe52f" stroke-width="3" /><path d="M743 808L698 828" stroke="#35e8e8" stroke-width="3" /><path d="M743 808L796 824" stroke="#e33030" stroke-width="3" />
      <circle cx="742" cy="738" r="6" fill="#2fe52f" /><circle cx="698" cy="828" r="8" fill="#2ff0f0" /><circle cx="796" cy="824" r="7" fill="#ef3a3a" />
      <!-- cover plate -->
      <path d="M648 340V400Q690 494 900 495Q1130 490 1161 390V330Z" fill="url(#rim)" />
      <ellipse cx="905" cy="338" rx="256" ry="95" fill="#c6c5c5" />
      <ellipse cx="903" cy="332" rx="94" ry="36" fill="url(#copper)" />
      ${bolt(1096, 327)}${bolt(778, 378)}
      <!-- arm -->
      <path d="M760 160V290Q790 346 902 349Q1030 345 1047 298V155Z" fill="url(#hub)" />
      <path d="M54 280V405Q80 445 165 446Q250 445 279 405V290Z" fill="url(#hub)" />
      <path d="M210 350L270 343L945 248V308L800 330L275 403L215 408Z" fill="#52575d" />
      <path d="M245 246L290 242L765 158V210Q820 250 945 250L262 346Q279 320 279 295Z" fill="#5f686b" />
      <path d="M200 330Q276 322 279 292V308Q272 335 215 350Z" fill="#474d52" />
      <ellipse cx="166" cy="279" rx="113" ry="44" fill="#5f686b" />
      <path d="M215 242Q245 250 300 240L320 280L279 296Z" fill="#5f686b" />
      <ellipse cx="165" cy="278" rx="56" ry="22" fill="url(#hub)" />
      <path d="M760 155V205Q800 240 900 246L945 248V200Z" fill="#555d64" />
      <ellipse cx="902" cy="158" rx="142" ry="53" fill="#5f686b" />
      <path d="M800 170L830 164V178H812Z" fill="#454d51" />
      <!-- shaft -->
      <ellipse cx="901" cy="161" rx="71" ry="27" fill="#a85623" />
      <path d="M851 84V168Q900 192 949 168V84Z" fill="url(#copper)" />
      <path d="M851 84Q855 68 870 66H932Q946 70 949 84Q900 122 851 84Z" fill="#c56c33" />
      <ellipse cx="901" cy="76" rx="42" ry="16" fill="#a85a26" />
    </g>
  </svg>`;

/* ---------- application ---------- */

@customElement("app-root")
export class AppRoot extends LitElement {
  @state() private query = "";
  @state() private selected = "Exp0001";

  static styles = css`
    :host { display: flex; flex-direction: column; min-height: 100vh; font-family: "Open Sans", "Noto Sans", sans-serif; font-size: 14px; line-height: 20px; color: #4a4c4e; background: #fff; overflow: hidden; }
    * { box-sizing: border-box; }
    button, input, select { font: inherit; color: inherit; margin: 0; padding: 0; border: 0; background: none; border-radius: 0; }
    button { display: inline-flex; align-items: center; justify-content: center; flex: none; white-space: nowrap; }
    .icon { display: block; flex: none; overflow: visible; }
    .caret { flex: none; width: 8px; height: 5px; background: #5f6163; clip-path: polygon(0 0, 100% 0, 50% 100%); }
    .caret.dim { background: #b0b0b0; }

    .titlebar { display: grid; grid-template-columns: 1fr auto 1fr; align-items: center; height: 34px; background: #fbfbfb; }
    .quick { display: flex; align-items: center; padding-left: 8px; }
    .brand { display: flex; align-items: center; gap: 4px; width: 93px; font: 400 22px/28px "Inter", sans-serif; color: #55585a; }
    .brand sup { width: 3px; height: 3px; margin: 0 0 6px -3px; border-radius: 50%; background: #777; }
    .quick button { width: 30px; height: 30px; }
    .quick button.drop { width: 16px; }
    .quick button.custom { width: 30px; margin-left: 2px; border-left: 1px solid #c5c5c5; flex-direction: column; gap: 1px; }
    .custom::before { content: ""; width: 10px; height: 1px; background: #555; }
    .title { margin: 0; font-size: 16px; line-height: 24px; font-weight: 400; color: #4b5052; }
    .winctl { display: flex; justify-content: flex-end; gap: 13px; padding-right: 10px; }

    .tabbar { display: flex; height: 35px; background: #3e4648; color: #f4f5f5; font-size: 16px; }
    .tabbar button { padding: 0 29px 0 28px; }
    .tabbar .file { padding: 0 25px; background: linear-gradient(160deg, #6fd044, #4a9e2e); color: #fff; }
    .tabbar .current { padding: 0 29px; background: #fff; color: #41892a; }
    .tabbar .tools { display: flex; align-items: center; margin-left: auto; font-weight: 700; }
    .tabbar .tools button { padding: 0; width: 30px; }
    .tabbar .tools .drop { width: 16px; }
    .tabbar .caret { background: #fff; }

    .ribbon { display: grid; grid-template-columns: 140px 85px 229px 270px 117px 89px 503px 252px 154px 1fr; height: 136px; border-bottom: 1px solid #aebebc; }
    .group { display: flex; flex-direction: column; justify-content: space-between; margin: 3px 0 2px; padding: 4px 8px 0; border-right: 1px solid #bfc8ca; }
    .group.flush { padding-left: 7px; padding-right: 4px; }
    .items { display: flex; justify-content: space-between; align-items: flex-start; }
    .items.center { justify-content: center; }
    .footer { width: 100%; gap: 5px; height: 24px; }
    .big { flex-direction: column; align-items: center; justify-content: flex-start; line-height: 20px; }
    .big .icon { margin-bottom: 12px; }
    .big .line { display: flex; align-items: center; gap: 5px; }
    .big .under { margin: 6px 0; }
    .big:disabled, .small:disabled { color: #b0b2b3; }
    .stack { display: flex; flex-direction: column; gap: 14px; align-items: flex-start; padding-top: 1px; }
    .small { height: 20px; gap: 5px; }
    .small .caret { margin-left: 5px; }
    .split { align-self: stretch; width: 1px; background: #c9cfd0; }

    .work { flex: 1; display: flex; min-height: 0; }
    .side { width: 488px; flex: none; display: flex; flex-direction: column; background: #fff; }
    .sidetabs { display: flex; height: 32px; background: #e8ecec; }
    .sidetabs button { width: 38px; }
    .sidetabs .current { width: 39px; background: #fff; }
    .treebar { display: flex; align-items: center; height: 40px; padding: 0 4px 0 8px; }
    .treebar button { width: 30px; height: 30px; }
    .treebar .pressed { border: 1px solid #a9abad; background: #e1e3e5; }
    .treebar .sep { width: 1px; height: 30px; margin: 0 5px; background: #c5c8ca; }
    .treebar .dots { width: 3px; height: 20px; margin: 0 17px 0 2px; background: radial-gradient(circle at center, #c5c5c5 1px, transparent 2px) 0 0 / 3px 5px; }
    .treebar .end { margin-left: auto; }
    .search { display: flex; align-items: center; height: 34px; padding: 0 8px 0 14px; }
    .search .box { display: flex; flex: 1; height: 34px; margin-left: 4px; border: 1px solid #a9b8b7; }
    .search input { flex: 1; min-width: 0; padding: 0 8px; outline: none; }
    .search button { width: 22px; }
    .search .add { width: 28px; }

    .tree { flex: 1; display: flex; flex-direction: column; margin: 6px 6px 7px 10px; background: linear-gradient(#e4e5e6, #e4e5e6) 265px 0 / 1px calc(100% - 19px) no-repeat; }
    .tree table { width: 100%; border-collapse: collapse; table-layout: fixed; font-size: 12px; }
    .tree col.first { width: 265px; }
    .tree th { height: 27px; padding: 4px 0 0 8px; background: #f9f9f9; border-bottom: 1px solid #cbcdce; text-align: left; font-size: 14px; font-weight: 400; color: #2c2c2c; }
    .tree th + th { border-left: 1px solid #cbcdce; }
    .headcell { display: flex; align-items: center; }
    .tree td { height: 22px; padding: 0; }
    .node { display: flex; align-items: center; height: 22px; padding-left: 4px; gap: 6px; }
    .node.child { padding-left: 10px; gap: 6px; }
    .node.dim { color: #bfb49d; }
    .branch { display: grid; grid-template-columns: 7px 6px; align-items: center; width: 13px; height: 22px; background: linear-gradient(#cfcfcf, #cfcfcf) 3px 0 / 1px 100% no-repeat, linear-gradient(#cfcfcf, #cfcfcf) 3px 11px / 10px 1px no-repeat; }
    .branch.open { background: linear-gradient(#cfcfcf, #cfcfcf) 3px 0 / 1px 5px no-repeat, linear-gradient(#cfcfcf, #cfcfcf) 3px 17px / 1px 5px no-repeat; }
    .branch.last { background: linear-gradient(#cfcfcf, #cfcfcf) 3px 0 / 1px 11px no-repeat, linear-gradient(#cfcfcf, #cfcfcf) 3px 11px / 10px 1px no-repeat; }
    .twisty { width: 6px; height: 10px; background: #6b6b6b; clip-path: polygon(0 0, 100% 50%, 0 100%); }
    .insert { height: 8px; margin: 5px 0 0 3px; background: linear-gradient(#63bb4a, #63bb4a) 0 3px / 100% 2px no-repeat; border-left: 2px solid #63bb4a; }
    .scrolls { display: flex; margin-top: auto; height: 18px; }
    .bar { display: flex; flex: 1; border: 1px solid #d3d8dc; }
    .bar.first { flex: none; width: 266px; }
    .bar button { width: 17px; background: #f5f6f7; }
    .bar .track { flex: 1; border: 0 solid #d3d8dc; border-width: 0 1px; background: #fff; }
    .bar .thumb { width: 165px; height: 16px; background: #f6f6f6; border-right: 1px solid #b5b5b5; }
    .bar .full { background: #dcdee0; border-color: #b5b5b5; }
    .left, .right { width: 5px; height: 9px; background: #9a9c9e; }
    .left { clip-path: polygon(100% 0, 0 50%, 100% 100%); }
    .right { clip-path: polygon(0 0, 100% 50%, 0 100%); }

    .canvas { position: relative; flex: 1; min-width: 0; background: #e8eaee; }
    .floatbar { display: flex; justify-content: center; padding: 7px 0 0 2px; }
    .viewbar { display: flex; align-items: center; gap: 3px; height: 38px; padding: 0 3px; border: 1px solid #a9b8bb; background: #fff; }
    .viewbar button { width: 29px; height: 29px; }
    .viewbar .pressed { background: #dfe2e5; border: 1px solid #a6a9ab; }
    .model { position: absolute; left: 452px; top: 145px; }
    .pointer { position: absolute; left: 430px; top: 107px; }

    .dialog { position: absolute; top: 12px; right: 0; width: 432px; display: flex; flex-direction: column; border: 1px solid #a5a6a8; border-radius: 10px; background: #eeeff1; box-shadow: 0 16px 44px 2px rgba(20, 24, 32, 0.27); }
    .dialog header { display: grid; grid-template-columns: 38px 1fr 36px; align-items: center; height: 38px; color: #a0a2a4; background: #e6e7e9; border-radius: 9px 9px 0 0; text-align: center; }
    .dialog h2 { margin: 0; font-size: 14px; font-weight: 400; grid-column: 2; }
    .dialog .x .icon { opacity: 0.6; }
    .sheet { margin: 2px 1px 0; border: 1px solid #c0c3c5; background: #fbfbfb; }
    .tabs { display: flex; background: #eeeff1; }
    .tabs button { flex: 1 1 auto; height: 29px; padding: 2px 28px 0; border-right: 1px solid #cfd1d3; border-bottom: 1px solid #bcbfc1; color: #7c7e80; }
    .tabs button:last-child { border-right: 0; }
    .tabs .current { background: #fbfbfb; color: #2b2b2b; border-bottom-color: #fbfbfb; }
    .cmds { display: flex; align-items: center; gap: 4px; padding: 9px 4px 11px; }
    .cmds button, .foot button { height: 35px; padding: 0 11px; border: 1px solid #a9abad; background: #fafafa; }
    .cmds .edit { margin-left: 92px; padding-right: 4px; gap: 16px; }
    .cmds .options { padding: 0 4px 0 15px; gap: 16px; }
    .options .lbl { display: flex; align-items: center; gap: 8px; }
    .list { height: 327px; margin: 0 3px; padding: 1px; border: 1px solid #a9abad; background: #fff; }
    .list table { width: 100%; border-collapse: collapse; table-layout: fixed; }
    .list col.first { width: 166px; }
    .list th { height: 27px; padding: 2px 0 0; font-weight: 400; color: #2b2b2b; background: #f9f9f9; border: 1px solid #cfd1d3; border-top: 0; border-left: 0; }
    .list td { height: 28px; padding: 0 4px; }
    .list td.sel { background: #ade1fd; padding-left: 5px; color: #333; }
    .rowbtn { gap: 4px; }
    .foot { display: flex; justify-content: space-between; margin: 3px 6px; padding: 2px 0 1px; border-top: 1px solid #c0c3c5; }
    .foot button { height: 30px; }

    .status { display: flex; align-items: center; height: 47px; border-top: 1px solid #aebebc; padding: 0 21px 0 6px; background: #fff; }
    .status button { width: 30px; height: 30px; }
    .status .pressed { width: 27px; margin-right: 2px; border: 1px solid #a9abad; background: #e1e3e5; }
    .status .sep { width: 1px; height: 36px; background: #c5c8ca; }
    .status .msg { display: flex; align-items: center; gap: 6px; margin: 0 0 8px 7px; font-size: 12px; }
    .msg::before { content: ""; width: 6px; height: 6px; border-radius: 50%; background: #17688a; }
    .status .first { margin-left: 8px; height: 30px; }
    .right-end { display: flex; align-items: center; margin-left: auto; }
    .status .find { width: 51px; margin: 0 2px; border: 1px solid #b5b8ba; background: #f8f8f8; gap: 9px; }
    .status .box3d { width: 49px; height: 35px; margin: 0 119px 0 2px; border: 1px solid #a9abad; background: #f8f8f8; }
    .select { display: grid; grid-template-columns: 1fr 20px; width: 217px; height: 28px; border: 1px solid #a9abad; background: #f8f8f8; }
    .select select { grid-area: 1 / 1 / 2 / 3; appearance: none; padding: 0 8px; border-radius: 0; }
    .select .arrow { grid-area: 1 / 2; display: grid; place-items: center; border-left: 1px solid #a9abad; pointer-events: none; }
  `;

  private big(name: string, lines: string[], opts: { drop?: "under" | "inline"; disabled?: boolean } = {}) {
    const dim = classMap({ caret: true, dim: !!opts.disabled, under: opts.drop === "under" });
    return html`<button class="big" ?disabled=${opts.disabled}>
      ${icon(name, 40)}
      ${lines.map((l, i) => html`<span class="line">${l}${opts.drop === "inline" && i === lines.length - 1 ? html`<i class=${dim}></i>` : nothing}</span>`)}
      ${opts.drop === "under" ? html`<i class=${dim}></i>` : nothing}
    </button>`;
  }

  private small(name: string, label: string, opts: { hide?: boolean; drop?: boolean; disabled?: boolean } = {}) {
    return html`<button class="small" ?disabled=${opts.disabled} aria-label=${label}>
      ${icon(name)}${opts.hide ? nothing : html`<span>${label}</span>`}
      ${opts.drop ? html`<i class=${classMap({ caret: true, dim: !!opts.disabled })}></i>` : nothing}
    </button>`;
  }

  private group(label: string, items: unknown, cls = "", flush = false) {
    return html`<section class="group ${flush ? "flush" : ""}" aria-label=${label}>
      <div class="items ${cls}">${items}</div>
      <button class="footer">${label}<i class="caret"></i></button>
    </section>`;
  }

  private renderRibbon() {
    const hid = { hide: true };
    return html`<div class="ribbon">
      ${this.group("Operations", html`${this.big("regenerate", ["Regenerate"], { drop: "under" })}
        <div class="stack">${this.small("copy", "Copy", { ...hid, disabled: true })}${this.small("paste", "Paste", { ...hid, drop: true, disabled: true })}${this.small("del", "Delete", { ...hid, drop: true, disabled: true })}</div>`)}
      ${this.group("Get Data", html`<div class="stack">${this.small("shapes", "User-defined feature", hid)}${this.small("copyGeom", "Copy geometry", hid)}${this.small("shrink", "Shrinkwrap", hid)}</div>`, "center", true)}
      ${this.group("Component", html`${this.big("assemble", ["Assemble"], { drop: "under" })}
        <div class="stack">${this.small("createAsm", "Create", { ...hid, drop: true })}${this.small("repeat", "Repeat", { ...hid, disabled: true })}${this.small("mirror", "Mirror component", hid)}</div>
        <i class="split"></i>${this.big("drag", ["Drag", "Components"])}`)}
      ${this.group("Datum", html`${this.big("plane", ["Plane"])}
        <div class="stack">${this.small("axis", "Axis")}${this.small("point", "Point", { drop: true })}${this.small("csys", "Coordinate System")}</div>
        ${this.big("sketch", ["Sketch"])}`)}
      ${this.group("Cut & Surface", html`<div class="stack">${this.small("hole", "Hole")}${this.small("extrude", "Extrude")}${this.small("revolve", "Revolve")}</div>`, "center", true)}
      ${this.group("Modifiers", this.big("pattern", ["Pattern"], { drop: "under" }), "center", true)}
      ${this.group("Model Display", html`${this.big("manage", ["Manage", "Views"], { drop: "inline" })}${this.big("section", ["Section"], { drop: "under", disabled: true })}${this.big("appearances", ["Appearances"], { drop: "under" })}
        <div class="stack">${this.small("explodedView", "Exploded View")}${this.small("toggle", "Toggle Status", { disabled: true })}${this.small("editPos", "Edit Position")}</div>
        ${this.big("display", ["Display", "Style"], { drop: "inline" })}${this.big("perspective", ["Perspective", "View"])}`)}
      ${this.group("Model Intent", html`${this.big("interface", ["Component", "Interface"])}${this.big("publish", ["Publish", "Geometry"])}${this.big("family", ["Family", "Table"])}
        <div class="stack">${this.small("parens", "Parameters", hid)}${this.small("switchDim", "Switch dimensions", hid)}${this.small("relation", "Relations", hid)}</div>`)}
      ${this.group("Investigate", html`${this.big("bom", ["Bill of", "Materials"])}${this.big("refViewer", ["Reference", "Viewer"])}`)}
    </div>`;
  }

  private tool(name: string, label: string, cls = "", size = 20) {
    return html`<button class=${cls} aria-label=${label}>${icon(name, size)}</button>`;
  }

  private renderSide() {
    return html`<aside class="side">
      <div class="sidetabs">${this.tool("treeTab", "Model Tree", "current")}${this.tool("folders", "Folder Browser")}</div>
      <div class="treebar">
        ${this.tool("greenCube", "Show")}<i class="dots"></i>
        ${this.tool("expandAll", "Expand all")}${this.tool("collapseAll", "Collapse all")}${this.tool("columns", "Show columns", "pressed")}
        <i class="sep"></i>${this.tool("treeFilter", "Tree filters")}${this.tool("treeCols", "Tree columns")}
        <i class="sep"></i>${this.tool("gears", "Settings")}${this.tool("layers", "Layer tree")}${this.tool("selTree", "Select in tree")}
        ${this.tool("treeSettings", "Tree settings", "end")}
      </div>
      <div class="search">
        ${icon("funnel")}
        <div class="box">
          <input aria-label="Search tree" .value=${this.query} @input=${(e: Event) => (this.query = (e.target as HTMLInputElement).value)} />
          <button aria-label="Clear" @click=${() => (this.query = "")}>${icon("clear", 16)}</button>
        </div>
        <button aria-label="Search options"><i class="caret"></i></button>${this.tool("plus", "Add", "add")}
      </div>
      <div class="tree">
        <table>
          <colgroup><col class="first" /><col /></colgroup>
          <thead><tr><th></th><th><span class="headcell">${icon("masterRep")}Master Rep</span></th></tr></thead>
          <tbody>
            <tr><td><div class="node">${icon("asm")}EXPLODE.ASM</div></td><td></td></tr>
            ${NODES.map((n, i) => html`<tr><td><div class=${classMap({ node: true, child: true, dim: !!n.dim })}>
              <span class=${classMap({ branch: true, open: !!n.open, last: i === NODES.length - 1 })}>${n.open ? html`<i class="twisty"></i>` : nothing}</span>
              ${icon(n.icon)}${n.name}</div></td><td></td></tr>`)}
          </tbody>
        </table>
        <div class="insert"></div>
        <div class="scrolls">
          <div class="bar first"><button aria-label="Scroll left"><i class="left"></i></button><div class="track"></div><button aria-label="Scroll right"><i class="right"></i></button></div>
          <div class="bar"><button aria-label="Scroll left"><i class="left"></i></button><div class="track full"><div class="thumb"></div></div><button aria-label="Scroll right"><i class="right"></i></button></div>
        </div>
      </div>
    </aside>`;
  }

  private renderDialog() {
    const row = (name: string) => {
      const sel = this.selected === name;
      return html`<tr><td class=${sel ? "sel" : ""}><button class="rowbtn" @click=${() => (this.selected = name)}>${name === "Exp0001" ? icon("active", 16) : nothing}${name}</button></td><td></td></tr>`;
    };
    return html`<section class="dialog" role="dialog" aria-label="View Manager">
      <header><h2>View Manager</h2>${this.tool("close", "Close dialog", "x", 18)}</header>
      <div class="sheet">
        <div class="tabs">${["Simp Rep", "Style", "Sections", "Layers"].map((t) => html`<button>${t}</button>`)}</div>
        <div class="tabs"><button class="current">Explode</button>${["Orient", "Appearance", "All"].map((t) => html`<button>${t}</button>`)}</div>
        <div class="cmds">
          <button>New</button>
          <button class="edit">Edit<i class="caret"></i></button>
          <button class="options"><span class="lbl">${icon("eye", 18)}Options</span><i class="caret"></i></button>
        </div>
        <div class="list"><table>
          <colgroup><col class="first" /><col /></colgroup>
          <thead><tr><th>Names</th><th></th></tr></thead>
          <tbody>${row("Exp0001")}${row("Default Explode")}</tbody>
        </table></div>
      </div>
      <div class="foot"><button>Properties &gt;&gt;</button><button>Close</button></div>
    </section>`;
  }

  render() {
    const drop = (dim: boolean, label: string) => html`<button class="drop" aria-label=${label}><i class=${classMap({ caret: true, dim })}></i></button>`;
    return html`
      <header class="titlebar">
        <div class="quick">
          <div class="brand">${icon("asm", 22)}creo<sup></sup></div>
          ${this.tool("newFile", "New")}${this.tool("open", "Open")}${this.tool("save", "Save")}
          ${this.tool("undo", "Undo")}${drop(true, "Undo list")}${this.tool("redo", "Redo")}${drop(true, "Redo list")}
          ${this.tool("regenSmall", "Regenerate")}${this.tool("windows", "Windows")}${drop(false, "Window list")}${this.tool("closeWin", "Close window")}
          <button class="custom" aria-label="Customize"><i class="caret"></i></button>
        </div>
        <h1 class="title">EXPLODE (Active) - Creo Parametric</h1>
        <div class="winctl">${this.tool("min", "Minimize")}${this.tool("restore", "Restore")}${this.tool("close", "Close")}</div>
      </header>
      <nav class="tabbar">
        <button class="file">File</button><button class="current">Model</button>
        ${MENU.map((m) => html`<button>${m}</button>`)}
        <div class="tools">${this.tool("up", "Minimize ribbon")}${this.tool("find", "Command search")}${this.tool("learn", "Learning")}${drop(false, "Learning list")}<button>?</button></div>
      </nav>
      ${this.renderRibbon()}
      <main class="work">
        ${this.renderSide()}
        <div class="canvas">
          <div class="floatbar"><div class="viewbar">${VIEW_TOOLS.map(([n, l]) => this.tool(n, l, n === "annot" || n === "spin" ? "pressed" : "", 24))}</div></div>
          ${model}
          <svg class="pointer" width="28" height="42" viewBox="0 0 28 42" aria-hidden="true"><path d="M2 2v31l8-7 5 13q4 1 5-2l-5-12h10z" fill="#fff" stroke="#111" stroke-width="2" stroke-linejoin="round" /></svg>
          ${this.renderDialog()}
        </div>
      </main>
      <footer class="status">
        ${this.tool("panel", "Navigator", "pressed")}${this.tool("globe", "Browser")}${this.tool("blank", "Full screen")}
        <i class="sep first"></i>
        <div class="msg">Assembly components have been successfully unexploded.</div>
        <div class="right-end">
          <i class="sep"></i>${this.tool("regenPart", "Regeneration status")}<i class="sep"></i>
          <button class="find" aria-label="Find">${icon("binoculars")}<i class="caret"></i></button>
          <i class="sep"></i>${this.tool("modelBox", "Model display", "box3d", 24)}
          <label class="select"><select aria-label="Selection filter"><option>Geometry</option></select><span class="arrow"><i class="caret"></i></span></label>
        </div>
      </footer>`;
  }
}
